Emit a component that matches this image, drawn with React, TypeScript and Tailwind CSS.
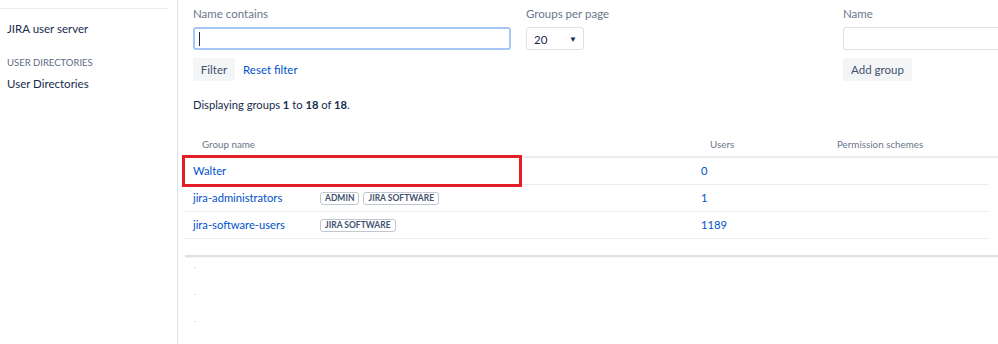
import React from "react";

const font = { fontFamily: 'Lato, "Noto Sans", sans-serif' };

function Lozenge({ children }: { children: React.ReactNode }) {
  return (
    <span className="inline-flex h-[13px] items-center rounded-[3px] border border-[#c1c7d0] bg-white px-[4px] text-[8.5px] font-bold leading-none text-[#42526e]">
      {children}
    </span>
  );
}

export default function App() {
  const rows = [
    { name: "Walter", tags: [] as string[], users: "0" },
    { name: "jira-administrators", tags: ["ADMIN", "JIRA SOFTWARE"], users: "1" },
    { name: "jira-software-users", tags: ["JIRA SOFTWARE"], users: "1189" },
  ];
  return (
    <div className="flex h-[344px] w-[998px] overflow-hidden bg-white text-[11px] text-[#172b4d]" style={font}>
      {/* Sidebar */}
      <aside className="w-[178px] shrink-0 border-r border-[#dfe1e6] pt-[8px]">
        <div className="mr-[8px] border-t border-[#ebecf0]" />
        <div className="pl-[7px] pt-[12px] text-[11.5px] leading-[16px] text-[#172b4d]">JIRA user server</div>
        <div className="pl-[7px] pt-[20px] text-[9.5px] leading-[12px] text-[#5e6c84]">USER DIRECTORIES</div>
        <div className="pl-[7px] pt-[7px] text-[11.5px] leading-[16px] text-[#172b4d]">User Directories</div>
      </aside>

      {/* Main */}
      <main className="flex-1 pl-[7px]">
        <div className="flex pl-[8px] pt-[6px]">
          <div className="w-[318px]">
            <div className="text-[11.5px] leading-[16px] text-[#6b778c]">Name contains</div>
            <div className="mt-[5px] flex h-[23px] items-center rounded-[3px] border-2 border-[#a6c6f5] bg-white pl-[4px]">
              <span className="h-[14px] w-[1px] bg-[#172b4d]" />
            </div>
            <div className="mt-[8px] flex items-center gap-[8px]">
              <button className="h-[23px] w-[42px] rounded-[3px] bg-[#f4f5f7] text-[11.5px] text-[#42526e]">Filter</button>
              <span className="text-[11.5px] text-[#0052cc]">Reset filter</span>
            </div>
          </div>
          <div className="ml-[15px] w-[58px]">
            <div className="whitespace-nowrap text-[11.5px] leading-[16px] text-[#6b778c]">Groups per page</div>
            <div className="mt-[5px] flex h-[23px] items-center justify-between rounded-[3px] border border-[#dfe1e6] bg-white pl-[7px] pr-[6px]">
              <span className="pt-[2px] text-[11.5px] text-[#172b4d]">20</span>
              <span className="text-[8px] text-[#172b4d]">▼</span>
            </div>
          </div>
          <div className="ml-[259px] flex-1">
            <div className="text-[11.5px] leading-[16px] text-[#6b778c]">Name</div>
            <div className="mt-[5px] h-[23px] rounded-l-[3px] border border-r-0 border-[#dfe1e6] bg-white" />
            <button className="mt-[8px] h-[23px] w-[69px] rounded-[3px] bg-[#f4f5f7] text-[11.5px] text-[#42526e]">Add group</button>
          </div>
        </div>

        <div className="pl-[8px] pt-[16px] text-[11.2px] leading-[16px] text-[#172b4d]">
          Displaying groups <b>1</b> to <b>18</b> of <b>18</b>.
        </div>

        {/* Table */}
        <div className="mt-[20px]">
          <div className="flex h-[25px] items-center border-b-2 border-[#ebecf0] text-[9.8px] text-[#6b778c]">
            <div className="w-[525px] pl-[17px]">Group name</div>
            <div className="w-[127px]">Users</div>
            <div>Permission schemes</div>
          </div>
          <div className="mr-[9px]">
            {rows.map((r, i) => (
              <div key={r.name} className="relative flex h-[27px] items-center border-b border-[#ebecf0]">
                {i === 0 && (
                  <div className="pointer-events-none absolute left-[-3px] top-[-3px] h-[32px] w-[340px] border-[3px] border-[#e41e26]" />
                )}
                <div className="w-[135px] pl-[8px] text-[11.2px] text-[#0052cc]">{r.name}</div>
                <div className="flex w-[381px] gap-[4px]">
                  {r.tags.map((t) => (
                    <Lozenge key={t}>{t}</Lozenge>
                  ))}
                </div>
                <div className="text-[11.2px] text-[#0052cc]">{r.users}</div>
              </div>
            ))}
          </div>
          <div className="mt-[16px] h-[3px] border-t-2 border-[#dfe1e6] bg-[#f4f5f7]" />
          <div className="pl-[9px]">
            <div className="mt-[9px] h-[1px] w-[2px] bg-[#dfe1e6]" />
            <div className="mt-[26px] h-[1px] w-[2px] bg-[#dfe1e6]" />
            <div className="mt-[26px] h-[1px] w-[2px] bg-[#dfe1e6]" />
          </div>
        </div>
      </main>
    </div>
  );
}
